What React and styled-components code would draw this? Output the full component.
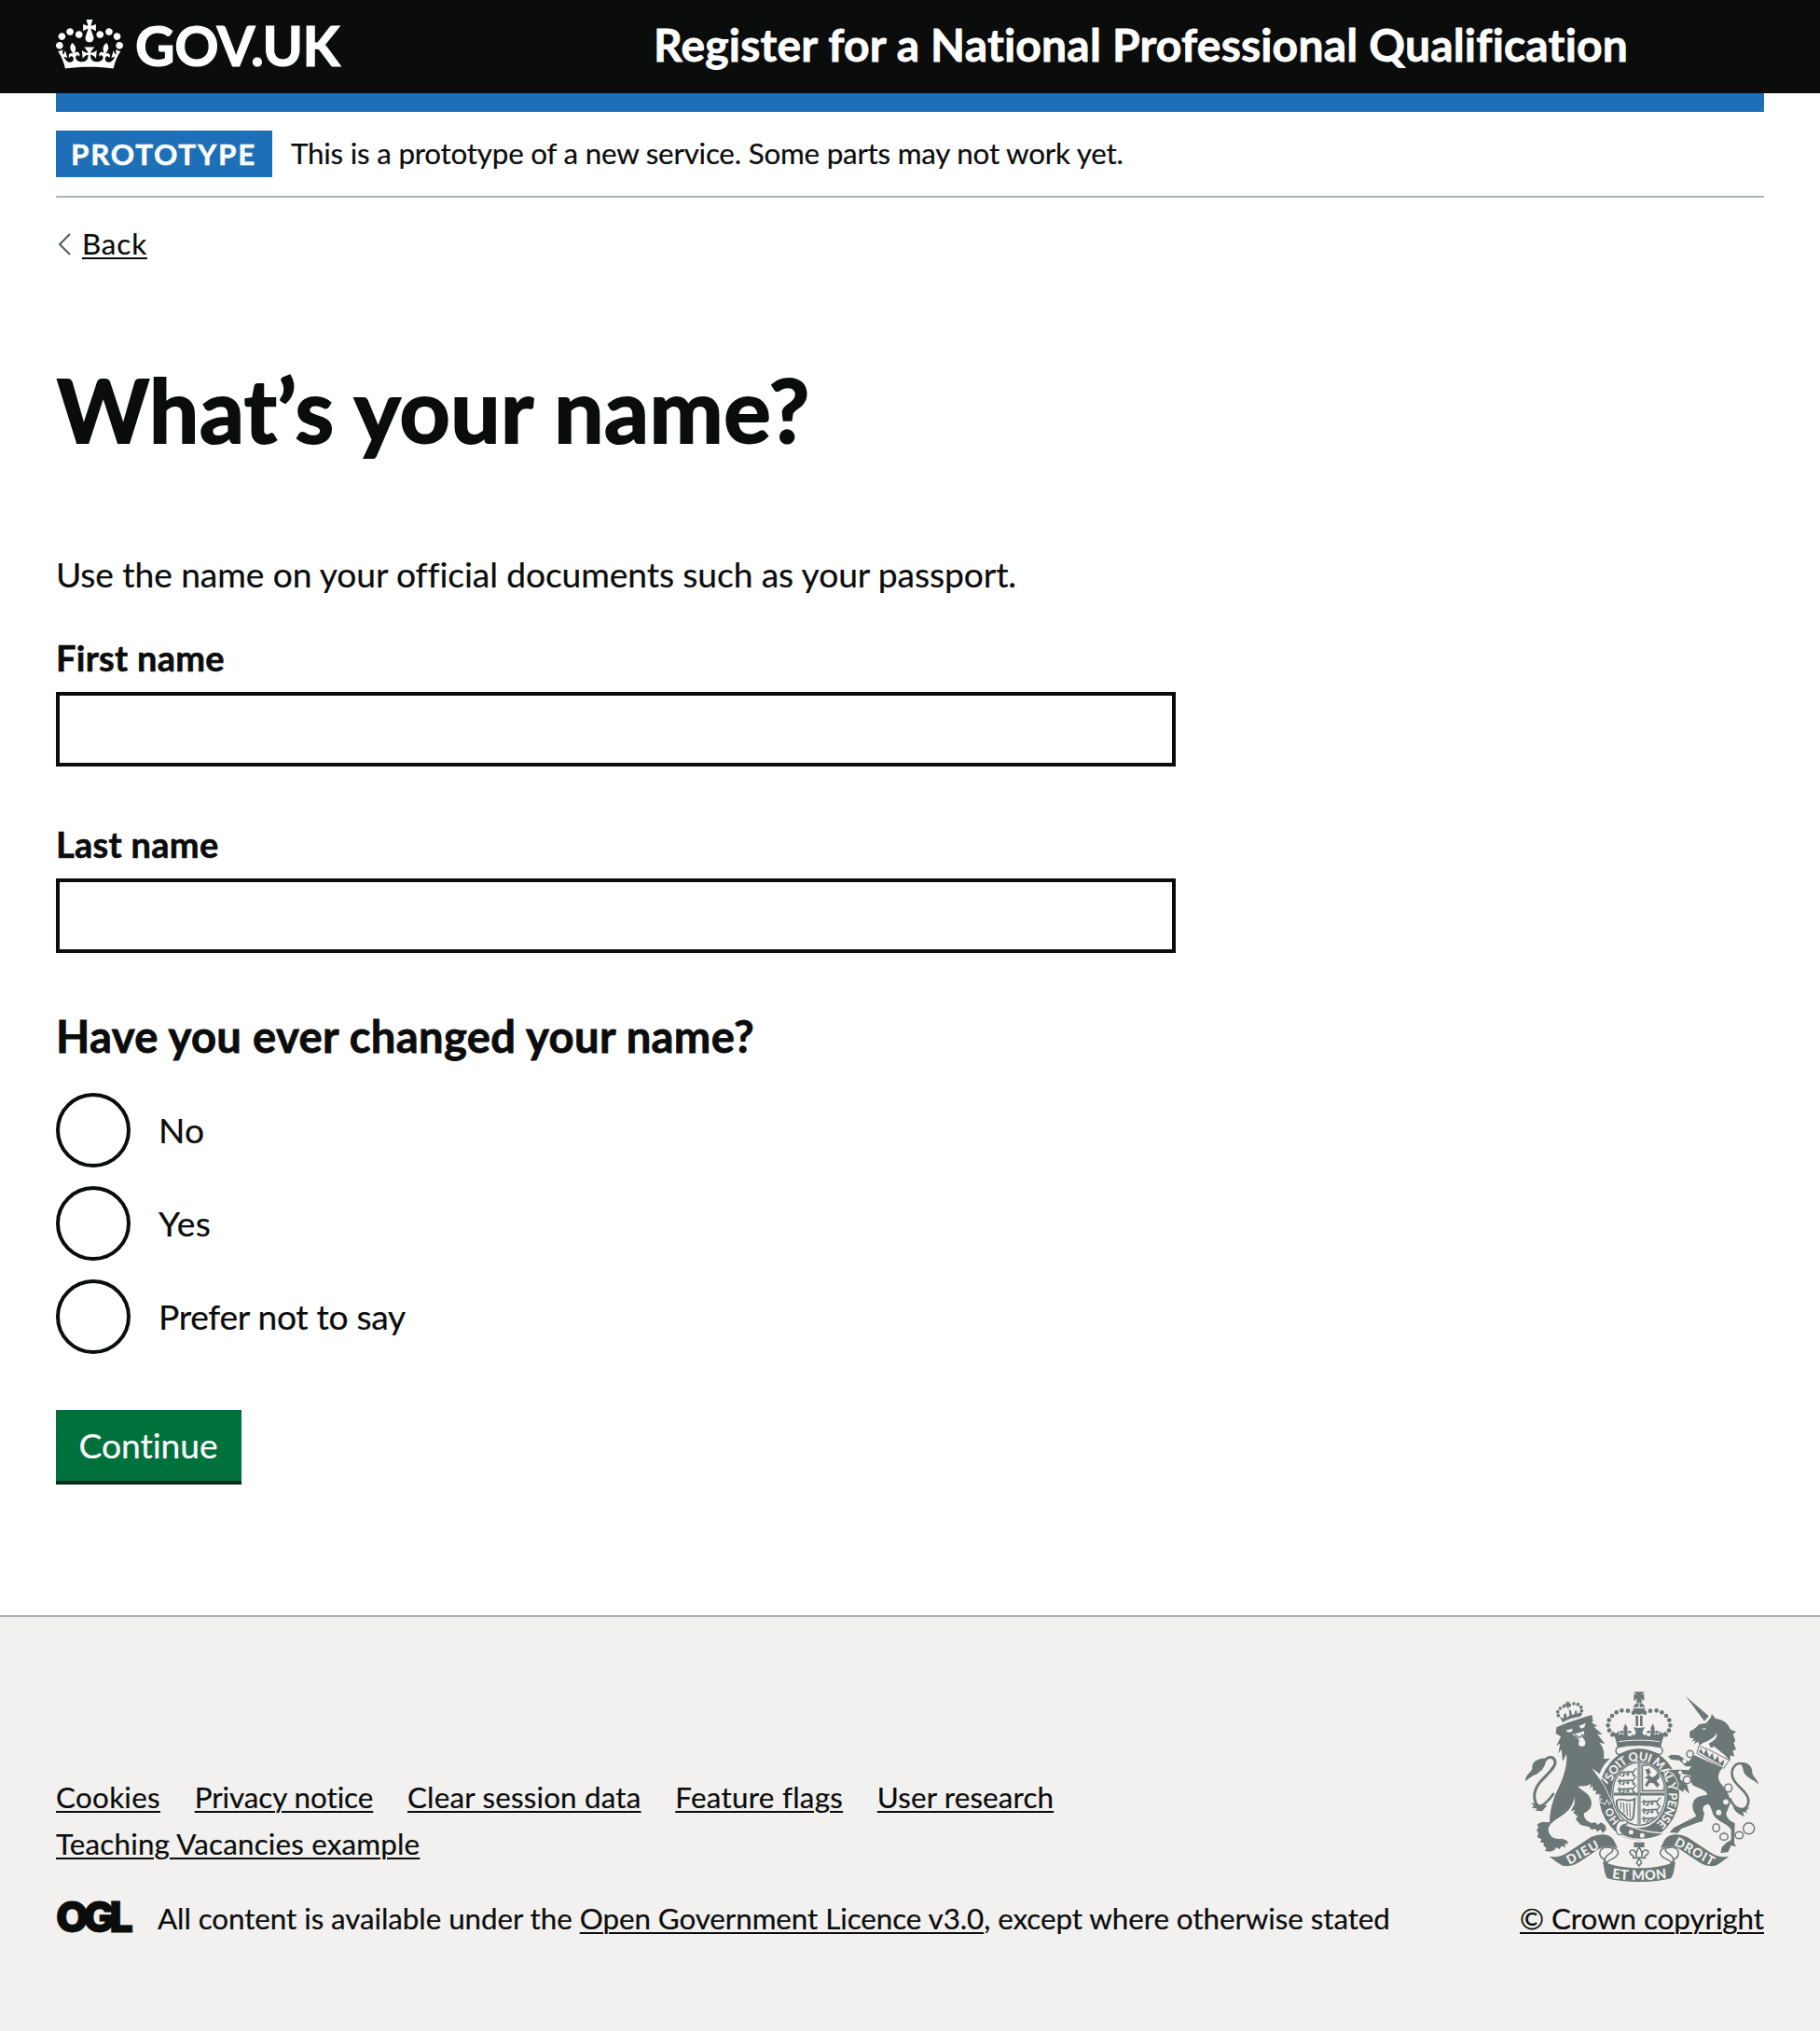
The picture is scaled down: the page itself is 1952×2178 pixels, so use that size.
import React from "react";
import styled, { createGlobalStyle } from "styled-components";

const ink = "#0b0c0c";
const blue = "#1d70b8";
const rule = "#b1b4b6";
const footerBg = "#f2f1ef";
const crestInk = "#6c7878";

const GlobalStyle = createGlobalStyle`
  *, *::before, *::after { box-sizing: border-box; }
  body {
    margin: 0;
    background: #fff;
    color: ${ink};
    font-family: Lato, "Noto Sans", Arial, sans-serif;
    font-variant-ligatures: none;
    -webkit-text-stroke: 0.2px currentColor;
  }
`;

const Page = styled.div`
  display: flex;
  flex-direction: column;
  width: 1952px;
  min-height: 2178px;
`;

const Header = styled.header`
  height: 100px;
  padding: 0 60px;
  background: ${ink};
  color: #fff;
`;

const HeaderRow = styled.div`
  display: grid;
  grid-template-columns: 640px 1fr;
  align-items: start;
`;

const Logo = styled.a`
  display: flex;
  align-items: flex-start;
  gap: 13px;
  padding-top: 18px;
`;

const Crown = styled.svg`
  width: 72px;
  height: 53px;
  margin-top: 3px;
`;

const LogoText = styled.span`
  font-size: 58.6px;
  font-weight: 700;
  line-height: 60px;
  letter-spacing: -0.4px;
  -webkit-text-stroke-width: 1.2px;
`;

const ServiceName = styled.span`
  padding: 18px 0 0 1px;
  font-size: 48px;
  font-weight: 700;
  line-height: 60px;
  letter-spacing: 0.2px;
  white-space: nowrap;
  -webkit-text-stroke-width: 0.8px;
`;

const Container = styled.div`
  padding: 0 60px;
`;

const BlueBar = styled.div`
  height: 20px;
  background: ${blue};
`;

const PhaseBanner = styled.div`
  display: flex;
  align-items: flex-start;
  gap: 20px;
  height: 92px;
  padding-top: 20px;
  border-bottom: 2px solid ${rule};
`;

const Tag = styled.strong`
  width: 232px;
  height: 50px;
  padding-left: 16px;
  background: ${blue};
  color: #fff;
  font-size: 31.4px;
  font-weight: 700;
  line-height: 50px;
  letter-spacing: 1.75px;
  -webkit-text-stroke-width: 0.5px;
`;

const PhaseText = styled.span`
  font-size: 31.36px;
  line-height: 48px;
  letter-spacing: -0.22px;
`;

const BackRow = styled.div`
  display: flex;
  align-items: flex-start;
  gap: 12px;
  margin-top: 29px;
  padding-left: 2px;
`;

const Chevron = styled.svg`
  width: 14px;
  height: 24px;
  margin-top: 9px;
`;

const Link = styled.a`
  color: ${ink};
  font-size: 31.36px;
  line-height: ${(p) => p.$line || 50}px;
  letter-spacing: ${(p) => p.$track || 0}px;
  text-decoration: underline;
  text-decoration-thickness: 2px;
  text-underline-offset: 3px;
  white-space: nowrap;
`;

const Title = styled.h1`
  margin: 108px 0 0;
  padding-left: 1px;
  font-size: 94.5px;
  font-weight: 700;
  line-height: 100px;
  letter-spacing: 0.5px;
  -webkit-text-stroke-width: 2px;
`;

const Intro = styled.p`
  margin: 102px 0 39px;
  font-size: 37.24px;
  line-height: 50px;
  letter-spacing: -0.12px;
`;

const Field = styled.div`
  display: flex;
  flex-direction: column;
  gap: 12px;
  width: 1201px;
  margin-bottom: 58px;
`;

const FieldLabel = styled.label`
  font-size: 38px;
  font-weight: 700;
  line-height: 50px;
  letter-spacing: 0.28px;
  -webkit-text-stroke-width: 0.6px;
`;

const TextInput = styled.input`
  height: 80px;
  padding: 10px;
  border: 4px solid ${ink};
  border-radius: 0;
  background: #fff;
  font: inherit;
`;

const Fieldset = styled.fieldset`
  display: flex;
  flex-direction: column;
  gap: 20px;
  margin: 0;
  padding: 0;
  border: 0;
`;

const Legend = styled.legend`
  margin-bottom: 31px;
  padding: 1px 0 0;
  font-size: 47.2px;
  font-weight: 700;
  line-height: 60px;
  letter-spacing: 0.33px;
  -webkit-text-stroke-width: 0.8px;
`;

const RadioRow = styled.label`
  display: flex;
  align-items: center;
  gap: 30px;
  height: 80px;
  font-size: 37.24px;
  line-height: 46px;
  letter-spacing: ${(p) => p.$track}px;
`;

const RadioInput = styled.input`
  appearance: none;
  width: 80px;
  height: 80px;
  margin: 0;
  border: 4px solid ${ink};
  border-radius: 50%;
`;

const Button = styled.button`
  width: 199px;
  height: 80px;
  margin-top: 60px;
  padding: 0 1px 0 0;
  border: 0;
  border-bottom: 4px solid #002d18;
  background: #00703c;
  color: #fff;
  font-family: inherit;
  font-size: 37.24px;
  line-height: 76px;
  letter-spacing: -0.08px;
`;

const Footer = styled.footer`
  display: flex;
  flex: 1;
  align-items: flex-start;
  justify-content: space-between;
  margin-top: 140px;
  padding: 80px 60px 0;
  border-top: 2px solid ${rule};
  background: ${footerBg};
`;

const FooterMain = styled.div`
  display: flex;
  flex-direction: column;
  gap: 30px;
  padding-top: 88px;
`;

const FooterLinks = styled.nav`
  display: flex;
  flex-wrap: wrap;
  column-gap: 36.7px;
  width: 1440px;
`;

const LicenceRow = styled.div`
  display: flex;
  align-items: flex-start;
`;

const OglMark = styled.span`
  width: 109px;
  margin-top: 7px;
  font-family: Inter, sans-serif;
  font-size: 45px;
  font-weight: 900;
  line-height: 34px;
  letter-spacing: -5.7px;
  -webkit-text-stroke-width: 0.8px;
`;

const LicenceText = styled.span`
  font-size: 31.36px;
  line-height: 50px;
  letter-spacing: -0.07px;
  white-space: nowrap;
`;

const CopyrightBlock = styled.div`
  display: flex;
  flex-direction: column;
  width: 262px;
  gap: 14px;
`;

const Crest = styled.svg`
  width: 250px;
  height: 204px;
  margin-left: 6px;
`;

const CrestText = styled.text`
  fill: ${footerBg};
  font-family: Lato, sans-serif;
  font-weight: 900;
  -webkit-text-stroke-width: 0;
`;

const archDots = [
  [456, 169], [438, 163], [418, 162], [401, 168], [387, 179], [377, 193],
  [374, 210], [378, 226], [388, 240],
];

const lionCrownDots = [
  [124, 100], [122, 88], [130, 77], [142, 70], [160, 67], [174, 62],
  [187, 64], [197, 73], [199, 85], [195, 96],
];

/* A column of three walking lions inside one quarter of the shield. */
const Lions = ({ x, y }) => (
  <g transform={`translate(${x} ${y})`} fill="none" stroke={crestInk} strokeWidth="5">
    {[0, 27, 54].map((dy) => (
      <g key={dy} transform={`translate(0 ${dy})`}>
        <path d="M6 4 L14 9 L50 7 M14 9 L8 21 M24 9 L22 20 L16 21 M38 8 L36 20 M50 7 L54 20 L60 19" />
        <path strokeWidth="4" d="M50 7 C62 8 52 -4 64 -2 M2 10 L12 13 M28 15 L40 16" />
      </g>
    ))}
  </g>
);

const HalfCrown = () => (
  <g fill={crestInk}>
    {archDots.map(([cx, cy]) => (
      <circle key={`${cx}-${cy}`} cx={cx} cy={cy} r="7" />
    ))}
    <path d="M386 228 L400 236 L408 228 L410 240 L420 236 C424 242 426 244 424 234 C418 232 414 238 410 232 C414 224 422 226 424 232 L424 218 L430 204 L437 218 L436 232 C440 224 448 226 450 232 C446 238 442 232 436 234 C436 246 446 250 452 238 L460 244 L474 236 V278 C446 276 424 278 404 282 C402 262 396 246 386 228Z" />
    <path d="M456 216 L474 218 V250 L456 246 L464 232Z" />
  </g>
);

const RibbonHalf = () => (
  <g>
    <path fill={crestInk} d="M185 632 C214 634 226 630 248 616 L318 570 C352 554 384 560 394 582 L405 604 L384 600 C370 596 352 602 340 610 L290 644 C268 660 250 664 232 662 C214 656 200 642 185 632Z" />
    <path fill={footerBg} stroke={crestInk} strokeWidth="4.5" d="M372 602 C344 602 340 628 360 640 C366 646 370 650 372 658 C366 646 384 642 394 636 C414 622 410 602 372 602Z" />
    <path fill="none" stroke={crestInk} strokeWidth="4.5" d="M372 602 C396 602 392 614 380 622 C366 630 360 640 364 652" />
  </g>
);

const RoyalCrest = () => (
  <Crest viewBox="108 101 750 612" aria-label="Royal coat of arms">
    <defs>
      <path id="motto" d="M379 432 A95 112 0 1 1 418 525" />
      <path id="mottoStart" d="M414 519 A95 112 0 0 1 379 432" />
      <path id="scroll" d="M384 701 Q474 714 564 701" />
      <clipPath id="shieldClip"><ellipse cx="474" cy="430" rx="82" ry="98" /></clipPath>
    </defs>

    {/* crown above the garter */}
    <HalfCrown />
    <g transform="translate(948 0) scale(-1 1)"><HalfCrown /></g>
    <g fill={crestInk}>
      <path d="M457 102 H491 L484 110 L480 114 L490 108 V131 L480 124 L484 136 H464 L468 124 L457 131 V108 L468 114Z" />
      <circle cx="474" cy="156" r="19" />
      <path d="M463 178 H471 V212 H463Z M477 178 H485 V212 H477Z" />
    </g>
    <path d="M456 153 H492 M474 138 V153" stroke={footerBg} strokeWidth="3.5" />
    <path d="M408 262 C450 256 498 256 540 262" fill="none" stroke={footerBg} strokeWidth="3" />
    <path d="M404 280 C446 270 502 270 544 280 C554 290 548 302 540 304 C500 288 448 288 408 304 C398 300 396 288 404 280Z" fill={footerBg} stroke={crestInk} strokeWidth="4.5" />

    {/* garter and shield */}
    <ellipse cx="474" cy="432" rx="109" ry="127" fill="none" stroke={crestInk} strokeWidth="40" />
    <CrestText fontSize="38">
      <textPath href="#motto" startOffset="42" textLength="384">SOIT QUI MAL Y PENSE</textPath>
    </CrestText>
    <CrestText fontSize="34">
      <textPath href="#mottoStart" startOffset="2">HO</textPath>
    </CrestText>
    <ellipse cx="474" cy="430" rx="85" ry="101" fill={footerBg} stroke={crestInk} strokeWidth="4" />
    <g clipPath="url(#shieldClip)">
      <Lions x="402" y="352" />
      <Lions x="480" y="446" />
      <path d="M484 338 H522 L554 380 V420 H484Z" fill="none" stroke={crestInk} strokeWidth="5" />
      <path d="M494 352 L506 348 L512 362 L504 368 L516 378 L528 370 L536 352 L540 378 L530 388 L540 400 L532 410 L520 396 L508 394 L500 408 L492 402 L504 384 L492 378 L502 372Z" fill={crestInk} />
      <path d="M402 452 C418 438 436 462 460 446 L456 500 C452 520 440 516 432 506 C420 490 398 486 402 452Z" fill="none" stroke={crestInk} strokeWidth="6" />
      <path d="M414 456 L416 478 M424 458 L426 490 M434 460 L436 500 M444 460 L445 506" stroke={crestInk} strokeWidth="3.5" />
      <path d="M474 328 V534 M386 431 H562" stroke={crestInk} strokeWidth="9" />
      <path d="M474 328 V534" stroke={footerBg} strokeWidth="2" />
      <path d="M460 534 L474 526 L490 540Z" fill={crestInk} />
    </g>
    <path d="M402 552 C440 584 510 584 556 556 C520 556 470 548 414 522Z" fill={crestInk} stroke={footerBg} strokeWidth="4" />
    <path d="M412 516 C398 526 394 546 406 560 C414 564 422 560 420 554 C408 548 412 534 426 528 C436 530 440 520 430 515 C424 512 420 522 412 516Z" fill={footerBg} stroke={crestInk} strokeWidth="4" />
    <g fill={footerBg}>
      <circle cx="448" cy="553" r="7.5" />
      <circle cx="484" cy="564" r="7.5" />
    </g>

    {/* lion */}
    <g transform="translate(90 78)">
      <path fill={crestInk} stroke={footerBg} strokeWidth="5" paintOrder="stroke" d="M118 138 L150 124 L205 106 L232 98 L236 118 L230 122 L250 134 L238 136 L266 161 L250 160 L274 191 L256 187 C268 200 274 218 270 240 L292 238 C278 248 264 266 257 288 L232 270 C252 298 270 320 282 350 L294 374 L288 384 L280 368 L274 384 L258 378 L266 368 L254 366 L262 356 L250 352 L244 356 L246 342 L236 342 L234 326 L226 334 L228 320 L216 326 L186 328 C205 345 226 352 230 375 C234 396 222 408 207 414 C204 428 214 440 230 446 L244 444 L250 452 L262 444 L276 454 L278 468 L266 478 L260 466 L250 474 L242 464 L232 468 L222 458 L196 452 L180 434 L186 424 L172 412 L178 404 L164 408 L176 385 L176 362 C170 392 158 408 130 426 C104 442 90 455 92 470 C96 488 108 500 136 496 L154 504 L154 514 L144 512 L148 524 L134 520 L128 530 L118 524 L110 534 L98 538 L80 536 L86 528 L76 518 L78 510 L66 508 L70 498 L56 492 L60 478 L54 468 L60 460 L56 450 L72 442 L96 444 C96 405 108 365 126 330 C145 290 154 250 150 224 L138 248 L134 208 L124 222 L130 190 L118 198 L132 168 L116 158Z" />
      <g fill={footerBg}>
        <path d="M148 148 L170 142 L168 152 L156 154Z M190 134 L212 124 L208 138 L198 142Z" />
        <path d="M168 160 L190 156 L206 150 L208 160 L200 168 C214 184 216 196 202 200 C188 200 186 190 192 182 L184 170Z" />
        <path d="M232 270 L284 314 L282 322 L258 296Z" />
      </g>
      <path d="M176 160 L192 172 L204 160" fill="none" stroke={crestInk} strokeWidth="4" />
      <g fill={crestInk}>
        {lionCrownDots.map(([cx, cy]) => (
          <circle key={`${cx}-${cy}`} cx={cx} cy={cy} r="5.5" />
        ))}
        <path d="M148 54 L156 58 L162 54 L160 62 L164 66 L156 66 L158 82 L150 70 L142 64 L150 62Z" />
        <path d="M128 104 L140 110 L142 96 L148 92 L152 106 L160 100 L158 84 L164 82 L168 98 L176 96 L178 84 L184 86 L184 94 L196 90 L194 104 C174 106 154 112 138 122Z" />
      </g>
      <path d="M62 394 C38 374 46 338 64 316 C86 290 116 268 114 248 C110 232 92 230 82 244" fill="none" stroke={crestInk} strokeWidth="9" />
      <path d="M54 396 C78 392 96 370 110 350" fill="none" stroke={crestInk} strokeWidth="8" />
      <path fill={crestInk} d="M18 312 C18 290 34 286 40 272 C36 250 58 234 90 238 C80 248 84 272 58 284 C72 284 44 288 18 312Z M34 380 L60 386 L88 390 L72 408 L50 406 L56 400 L38 396 L46 390Z" />
    </g>

    {/* unicorn */}
    <g transform="translate(468 78)">
      <path fill={crestInk} stroke={footerBg} strokeWidth="5" paintOrder="stroke" d="M184 228 L274 268 C256 290 258 305 272 322 C292 346 302 365 298 385 L286 415 C288 430 298 440 314 446 L312 510 L318 522 L302 518 L292 540 L268 542 L272 524 L286 510 L302 500 L302 468 C290 446 262 444 246 422 C238 402 236 388 228 385 C210 388 208 400 216 415 L210 440 L190 446 L142 464 L130 478 L104 476 L118 460 L135 452 L190 424 L180 405 C172 372 190 358 224 356 C230 348 210 338 190 330 C176 326 168 312 172 294 L140 286 L138 305 L160 322 L168 352 L150 336 L148 346 L130 335 L134 320 L118 288 L96 276 L130 274 L166 276 L174 264 L156 264 L135 244 L110 242 L98 232 L110 226 L134 228 L165 248Z" />
      <g fill={crestInk}>
        <path d="M156 38 L230 102 L216 118Z" />
        <path d="M168 160 L170 150 L180 146 L200 128 L222 124 L236 108 L240 96 L252 110 C275 112 292 125 300 145 L318 152 L308 160 L316 182 L310 187 L318 210 L308 212 L312 232 L300 228 L298 246 L282 228 L248 200 L236 204 L230 190 C250 182 258 170 256 156 C248 172 230 182 212 188 L200 196 L196 184 L182 192 L188 180 L176 184 L182 174 L170 172Z" />
        <path d="M330 252 C352 246 372 262 370 285 C374 300 386 304 390 322 C378 306 350 302 342 280 C340 268 338 262 330 252Z" />
        <path d="M306 392 L326 400 L362 396 L350 406 L354 412 L340 410 L344 426 L326 416 L316 408Z" />
      </g>
      <path d="M206 143 L222 140 L216 146Z" fill={footerBg} />
      <path d="M198 198 L230 210 L296 244 L278 270 L192 222Z" fill={footerBg} stroke={crestInk} strokeWidth="3" />
      <path d="M198 218 L204 206 L214 224 L222 208 L232 234 L242 220 L248 244 L260 230 L264 254 L280 242 L276 264Z" fill={crestInk} />
      <path d="M344 256 C318 248 300 268 306 296 C312 326 354 340 358 372 C358 396 344 404 328 400 C312 394 304 384 298 366" fill="none" stroke={crestInk} strokeWidth="8" />
      <g fill={footerBg} stroke={crestInk} strokeWidth="4.5">
        <ellipse cx="170" cy="224" rx="11" ry="11" />
        <ellipse cx="160" cy="307" rx="12" ry="12" />
        <ellipse cx="293" cy="333" rx="12" ry="13" />
        <ellipse cx="254" cy="461" rx="11" ry="13" />
        <ellipse cx="279" cy="490" rx="13" ry="11" />
        <ellipse cx="328" cy="485" rx="13" ry="11" />
        <circle cx="359" cy="463" r="18" />
      </g>
      <g fill={footerBg}>
        <circle cx="152" cy="247" r="7" />
        <circle cx="138" cy="283" r="6" />
        <circle cx="285" cy="378" r="8.5" />
        <circle cx="262" cy="412" r="8.5" />
      </g>
    </g>

    {/* ribbon with badge */}
    <RibbonHalf />
    <g transform="translate(948 0) scale(-1 1)"><RibbonHalf /></g>
    <path fill={crestInk} d="M357 648 C420 676 528 676 591 648 C586 672 586 690 576 702 C520 717 428 717 372 702 C362 690 362 670 357 648Z" />
    <CrestText fontSize="41" transform="translate(250 658) rotate(-29)" textLength="112">DIEU</CrestText>
    <CrestText fontSize="41" transform="translate(585 594) rotate(29)" textLength="140">DROIT</CrestText>
    <CrestText fontSize="44">
      <textPath href="#scroll" textLength="178" startOffset="2">ET MON</textPath>
    </CrestText>
    <path d="M457 586 H491 V602 H457Z" fill={crestInk} />
    <path d="M474 602 C466 612 462 620 466 634 C460 640 452 638 456 630 C446 626 440 616 448 612 C458 608 464 616 466 630 M474 602 C482 612 486 620 482 634 C488 640 496 638 492 630 C502 626 508 616 500 612 C490 608 484 616 482 630 M452 636 H496 M474 636 L466 652 L474 662 L482 652Z" fill="none" stroke={crestInk} strokeWidth="4.5" />
  </Crest>
);

const CrownIcon = () => (
  <Crown viewBox="0 0 132 97" fill="#fff" aria-hidden="true">
    <path fillRule="evenodd" d="M25 30.2c3.5 1.5 7.7-.2 9.1-3.7 1.5-3.6-.2-7.8-3.9-9.2-3.6-1.4-7.6.3-9.1 3.9-1.4 3.5.3 7.5 3.9 9zM9 39.5c3.6 1.5 7.8-.2 9.2-3.7 1.5-3.6-.2-7.8-3.9-9.1-3.6-1.5-7.6.2-9.1 3.8-1.4 3.5.3 7.5 3.8 9zM4.4 57.2c3.5 1.5 7.7-.2 9.1-3.8 1.5-3.6-.2-7.7-3.9-9.1-3.5-1.5-7.6.3-9.1 3.8-1.4 3.5.3 7.6 3.9 9.1zm38.3-21.4c3.5 1.5 7.7-.2 9.1-3.8 1.5-3.6-.2-7.7-3.9-9.1-3.6-1.5-7.6.3-9.1 3.8-1.3 3.6.4 7.7 3.9 9.1zm64.4-5.6c-3.6 1.5-7.8-.2-9.1-3.7-1.5-3.6.2-7.8 3.8-9.2 3.6-1.4 7.7.3 9.2 3.9 1.3 3.5-.4 7.5-3.9 9zm15.9 9.3c-3.6 1.5-7.7-.2-9.1-3.7-1.5-3.6.2-7.8 3.7-9.1 3.6-1.5 7.7.2 9.2 3.8 1.5 3.5-.3 7.5-3.8 9zm4.7 17.7c-3.6 1.5-7.8-.2-9.2-3.8-1.5-3.6.2-7.7 3.9-9.1 3.6-1.5 7.7.3 9.2 3.8 1.3 3.5-.4 7.6-3.9 9.1zM89.3 35.8c-3.6 1.5-7.8-.2-9.2-3.8-1.4-3.6.2-7.7 3.9-9.1 3.6-1.5 7.7.3 9.2 3.8 1.4 3.6-.3 7.7-3.9 9.1zM69.7 17.7l8.9 4.7V9.3l-8.9 2.8c-.2-.3-.5-.6-.9-.9L72.4 0H59.6l3.5 11.2c-.3.3-.6.5-.9.9l-8.8-2.8v13.1l8.8-4.7c.3.3.6.7.9.9l-5 15.4v.1c-.2.8-.4 1.6-.4 2.4 0 4.1 3.1 7.5 7 8.1h.2c.3 0 .7.1 1 .1.4 0 .7 0 1-.1h.2c4-.6 7.1-4.1 7.1-8.1 0-.8-.1-1.7-.4-2.4V34l-5.1-15.4c.4-.2.7-.6 1-.9zM66 92.8c16.9 0 32.8 1.1 47.1 3.2 4-16.9 8.9-26.7 14-33.5l-9.6-3.4c1 4.9 1.1 7.2 0 10.2-1.5-1.4-3-4.3-4.2-8.7L108.6 76c2.8-2 5-3.2 7.5-3.3-4.4 9.4-10 11.9-13.6 11.2-4.3-.8-6.3-4.6-5.6-7.9 1-4.7 5.7-5.9 8-.5 4.3-8.7-3-11.4-7.6-8.8 7.1-7.2 7.9-13.5 2.1-21.1-8 6.1-8.1 12.3-4.5 20.8-4.7-5.4-12.1-2.5-9.5 6.2 3.4-5.2 7.9-2 7.2 3.1-.6 4.3-6.4 7.8-13.5 7.2-10.3-.9-10.9-8-11.2-13.8 2.5-.5 7.1 1.8 11 7.3L80.2 60c-4.1 4.4-8 5.3-12.3 5.4 1.4-4.4 8-11.6 8-11.6H55.5s6.4 7.2 7.9 11.6c-4.2-.1-8-1-12.3-5.4l1.4 16.4c3.9-5.5 8.5-7.7 10.9-7.3-.3 5.8-.9 12.8-11.1 13.8-7.2.6-12.9-2.9-13.5-7.2-.7-5 3.8-8.3 7.1-3.1 2.7-8.7-4.6-11.6-9.4-6.2 3.7-8.5 3.6-14.7-4.6-20.8-5.8 7.6-5 13.9 2.2 21.1-4.7-2.6-11.9.1-7.7 8.8 2.3-5.5 7.1-4.2 8.1.5.7 3.3-1.3 7.1-5.7 7.9-3.5.7-9-1.8-13.5-11.2 2.5.1 4.7 1.3 7.5 3.3l-4.7-15.4c-1.2 4.4-2.7 7.2-4.3 8.7-1.1-3-.9-5.3 0-10.2l-9.5 3.4c5 6.9 9.9 16.7 14 33.5 14.8-2.1 30.8-3.2 47.7-3.2z" />
  </Crown>
);

const fields = [
  { id: "first-name", label: "First name" },
  { id: "last-name", label: "Last name" },
];

const options = [
  { label: "No", track: 0.2 },
  { label: "Yes", track: 0.5 },
  { label: "Prefer not to say", track: -0.32 },
];

const footerLinks = [
  { label: "Cookies", track: 0.31 },
  { label: "Privacy notice", track: -0.05 },
  { label: "Clear session data", track: 0.19 },
  { label: "Feature flags", track: 0.28 },
  { label: "User research", track: 0.14 },
  { label: "Teaching Vacancies example", track: 0.18 },
];

export default function App() {
  return (
    <Page>
      <GlobalStyle />
      <Header>
        <HeaderRow>
          <Logo>
            <CrownIcon />
            <LogoText>GOV.UK</LogoText>
          </Logo>
          <ServiceName>Register for a National Professional Qualification</ServiceName>
        </HeaderRow>
      </Header>

      <Container>
        <BlueBar />
        <PhaseBanner>
          <Tag>PROTOTYPE</Tag>
          <PhaseText>This is a prototype of a new service. Some parts may not work yet.</PhaseText>
        </PhaseBanner>

        <BackRow>
          <Chevron viewBox="0 0 14 24" aria-hidden="true">
            <path d="M13 1 L2 12 L13 23" fill="none" stroke="#505a5f" strokeWidth="2" />
          </Chevron>
          <Link $line={40} $track={0.85}>Back</Link>
        </BackRow>

        <Title>What’s your name?</Title>
        <Intro>Use the name on your official documents such as your passport.</Intro>

        {fields.map(({ id, label }) => (
          <Field key={id}>
            <FieldLabel htmlFor={id}>{label}</FieldLabel>
            <TextInput id={id} type="text" />
          </Field>
        ))}

        <Fieldset>
          <Legend>Have you ever changed your name?</Legend>
          {options.map(({ label, track }) => (
            <RadioRow key={label} $track={track}>
              <RadioInput type="radio" name="changed-name" />
              {label}
            </RadioRow>
          ))}
        </Fieldset>

        <Button type="button">Continue</Button>
      </Container>

      <Footer>
        <FooterMain>
          <FooterLinks>
            {footerLinks.map(({ label, track }) => (
              <Link key={label} $track={track}>{label}</Link>
            ))}
          </FooterLinks>
          <LicenceRow>
            <OglMark>OGL</OglMark>
            <LicenceText>
              All content is available under the{" "}
              <Link $track={-0.07}>Open Government Licence v3.0</Link>, except where otherwise stated
            </LicenceText>
          </LicenceRow>
        </FooterMain>
        <CopyrightBlock>
          <RoyalCrest />
          <Link $track={-0.06}>© Crown copyright</Link>
        </CopyrightBlock>
      </Footer>
    </Page>
  );
}
